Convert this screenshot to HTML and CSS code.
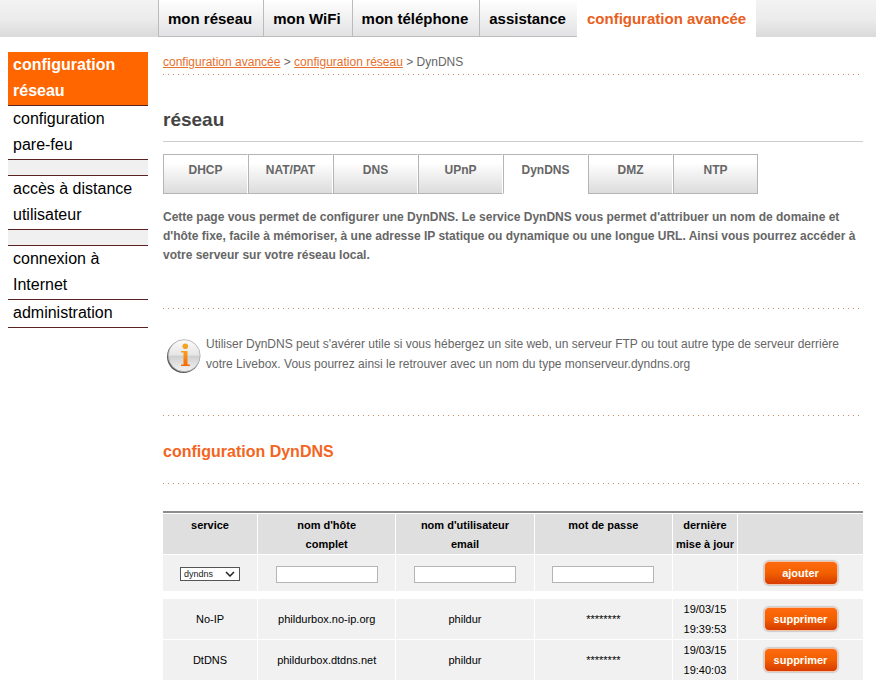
FILE: index.html
```html
<!DOCTYPE html>
<html lang="fr">
<head>
<meta charset="UTF-8">
<meta name="viewport" content="width=device-width, initial-scale=1.0">
<title>Livebox - DynDNS</title>
<link rel="stylesheet" href="styles.css">
</head>
<body>

<nav class="topbar">
    <a href="#">mon réseau</a>
    <a href="#">mon WiFi</a>
    <a href="#">mon téléphone</a>
    <a href="#">assistance</a>
    <a href="#" class="active">configuration avancée</a>
</nav>

<div class="page">
    <ul class="sidebar">
        <li class="active"><a href="#">configuration réseau</a></li>
        <li><a href="#">configuration <span class="nowrap">pare-feu</span></a></li>
        <li class="spacer"></li>
        <li><a href="#">accès à distance utilisateur</a></li>
        <li class="spacer"></li>
        <li><a href="#">connexion à Internet</a></li>
        <li><a href="#">administration</a></li>
    </ul>

    <main class="content">
        <p class="breadcrumb"><a href="#">configuration avancée</a> &gt; <a href="#">configuration réseau</a> &gt; DynDNS</p>
        <hr>

        <h1>réseau</h1>

        <nav class="tabs">
            <a href="#">DHCP</a>
            <a href="#">NAT/PAT</a>
            <a href="#">DNS</a>
            <a href="#">UPnP</a>
            <a href="#" class="active">DynDNS</a>
            <a href="#">DMZ</a>
            <a href="#">NTP</a>
        </nav>

        <p class="intro">Cette page vous permet de configurer une DynDNS. Le service DynDNS vous permet d'attribuer un nom de domaine et d'hôte fixe, facile à mémoriser, à une adresse IP statique ou dynamique ou une longue URL. Ainsi vous pourrez accéder à votre serveur sur votre réseau local.</p>
        <hr>

        <div class="info">
            <svg class="info-icon" width="36" height="36" viewBox="0 0 36 36" aria-hidden="true">
                <defs>
                    <linearGradient id="disc" x1="0" y1="0" x2="0" y2="1">
                        <stop offset="0" stop-color="#fafafa"/>
                        <stop offset="0.48" stop-color="#e6e6e6"/>
                        <stop offset="0.52" stop-color="#cfcfcf"/>
                        <stop offset="1" stop-color="#f4f4f4"/>
                    </linearGradient>
                    <linearGradient id="letter" x1="0" y1="0" x2="0" y2="1">
                        <stop offset="0" stop-color="#f9a01b"/>
                        <stop offset="1" stop-color="#f26a0a"/>
                    </linearGradient>
                </defs>
                <circle cx="17.4" cy="18.6" r="16.4" fill="#555"/>
                <circle cx="18.2" cy="17.6" r="16" fill="url(#disc)" stroke="#aaa" stroke-width="0.8"/>
                <circle cx="19.3" cy="8.2" r="2.8" fill="#f4a321"/>
                <path d="M15 13h6.5v13.500h2.500V28H15v-1.500h2.500V14.500H15z" fill="url(#letter)"/>
            </svg>
            <p>Utiliser DynDNS peut s'avérer utile si vous hébergez un site web, un serveur FTP ou tout autre type de serveur derrière votre Livebox. Vous pourrez ainsi le retrouver avec un nom du type monserveur.dyndns.org</p>
        </div>
        <hr>

        <h2>configuration DynDNS</h2>
        <hr>

        <form action="#">
            <table>
            <colgroup>
                <col class="col-service">
                <col class="col-field">
                <col class="col-field">
                <col class="col-field">
                <col class="col-date">
                <col class="col-action">
            </colgroup>
            <thead>
                <tr>
                    <th id="service">service</th>
                    <th id="host">nom d'hôte<br>complet</th>
                    <th id="user">nom d'utilisateur<br>email</th>
                    <th id="password">mot de passe</th>
                    <th>dernière<br>mise à jour</th>
                    <th></th>
                </tr>
            </thead>
            <tbody>
                <tr class="add">
                    <td>
                        <select aria-labelledby="service">
                            <option>dyndns</option>
                            <option>No-IP</option>
                            <option>DtDNS</option>
                        </select>
                    </td>
                    <td><input type="text" aria-labelledby="host"></td>
                    <td><input type="text" aria-labelledby="user"></td>
                    <td><input type="password" aria-labelledby="password"></td>
                    <td></td>
                    <td><button type="submit">ajouter</button></td>
                </tr>
                <tr>
                    <td>No-IP</td>
                    <td>phildurbox.no-ip.org</td>
                    <td>phildur</td>
                    <td>********</td>
                    <td>19/03/15<br>19:39:53</td>
                    <td><button type="button">supprimer</button></td>
                </tr>
                <tr>
                    <td>DtDNS</td>
                    <td>phildurbox.dtdns.net</td>
                    <td>phildur</td>
                    <td>********</td>
                    <td>19/03/15<br>19:40:03</td>
                    <td><button type="button">supprimer</button></td>
                </tr>
            </tbody>
            </table>
        </form>
    </main>
</div>

</body>
</html>
```
FILE: styles.css
```css
* {
    margin: 0;
    padding: 0;
    box-sizing: border-box;
}

body {
    font-family: "Liberation Sans", Arial, sans-serif;
    font-size: 12px;
    line-height: 20px;
    color: #666;
    background: #fff;
}

/* dotted separator */
hr {
    height: 1px;
    border: 0;
    background: repeating-linear-gradient(to right, #c98a66 0 1px, transparent 1px 5px);
}

.nowrap {
    white-space: nowrap;
}

/* top navigation */
.topbar {
    display: flex;
    height: 37px;
    padding-left: 158px;
    background: linear-gradient(#f3f3f3, #ececec 50%, #dadada);
}

.topbar a {
    padding: 0 11px 0 9px;
    border-left: 1px solid #bbb;
    border-bottom: 1px solid #bbb;
    background: linear-gradient(#fff, #e2e2e4);
    color: #000;
    font-size: 15px;
    font-weight: bold;
    line-height: 38px;
    text-decoration: none;
    white-space: nowrap;
}

.topbar a.active {
    padding: 0 10px;
    border: 0;
    background: #fff;
    color: #e8601c;
}

.page {
    display: flex;
    gap: 15px;
    padding: 15px 13px 15px 8px;
}

/* left menu */
.sidebar {
    flex: 0 0 140px;
    list-style: none;
    font-size: 16px;
    line-height: 26px;
}

.sidebar li {
    padding: 0 0 1px 5px;
    border-bottom: 1px solid #5a2323;
}

.sidebar a {
    display: block;
    color: #000;
    text-decoration: none;
}

.sidebar .active {
    background: #ff6600;
    font-weight: bold;
}

.sidebar .active a {
    color: #fff;
}

.sidebar .spacer {
    height: 16px;
    background: #f0f0f0;
}

.content {
    flex: 1;
    min-width: 0;
}

.breadcrumb {
    padding-bottom: 2px;
}

.breadcrumb a {
    color: #e8702c;
}

h1 {
    margin-top: 30px;
    padding-bottom: 6px;
    border-bottom: 1px solid #ccc;
    color: #444;
    font-size: 19px;
    line-height: 30px;
}

/* tabs */
.tabs {
    display: flex;
    margin: 12px 0 14px;
}

.tabs a {
    width: 85px;
    height: 40px;
    border: 1px solid #b5b5b5;
    border-right-color: #fff;
    background: linear-gradient(#fff 20%, #dcdcdc);
    color: #666;
    font-weight: bold;
    line-height: 30px;
    text-align: center;
    text-decoration: none;
}

.tabs a:last-child {
    border-right-color: #b5b5b5;
}

.tabs .active {
    border-bottom-color: #fff;
    background: #fff;
}

.intro {
    padding-bottom: 43px;
    font-weight: bold;
    line-height: 19px;
}

.info {
    display: flex;
    gap: 4px;
    padding: 25px 15px 41px 3px;
}

.info-icon {
    flex: none;
    margin-top: 4px;
}

h2 {
    padding: 22px 0 17px;
    color: #f26522;
    font-size: 16px;
    line-height: 28px;
}

/* accounts table */
table {
    width: 100%;
    margin-top: 27px;
    border-top: 2px solid #8c8c8c;
    border-spacing: 0;
    table-layout: fixed;
    color: #000;
    font-size: 11px;
    text-align: center;
}

.col-service {
    width: 95px;
}

.col-date {
    width: 65px;
}

.col-action {
    width: 125px;
}

th,
td {
    height: 41px;
    border-top: 1px solid #fff;
    border-right: 1px solid #fff;
    background: #f1f1f1;
    line-height: 20px;
}

th:last-child,
td:last-child {
    border-right: 0;
}

th {
    padding-top: 2px;
    background: #dfdfdf;
    line-height: 19px;
    vertical-align: top;
}

.add td {
    height: 44px;
    border-bottom: 7px solid #fff;
}

select {
    width: 60px;
    height: 14px;
    padding-left: 3px;
    border: 1px solid #555;
    appearance: none;
    background: #fff url("data:image/svg+xml,%3Csvg xmlns='http://www.w3.org/2000/svg' width='10' height='6'%3E%3Cpath d='M1 1l4 4 4-4' fill='none' stroke='%23222' stroke-width='1.500'/%3E%3C/svg%3E") right 4px center no-repeat;
    color: #222;
    font-family: inherit;
    font-size: 9px;
    vertical-align: middle;
}

input {
    width: 102px;
    height: 17px;
    border: 1px solid #b5b5b5;
    background: #fff;
    vertical-align: middle;
}

button {
    width: 74px;
    height: 24px;
    border: 1px solid #f4c3a8;
    border-radius: 5px;
    background: linear-gradient(#ff6a10, #f26000 50%, #d63c00);
    box-shadow: 0 0 1px 1px #ccc;
    color: #fff;
    font-family: inherit;
    font-size: 11px;
    font-weight: bold;
    vertical-align: middle;
}
```
